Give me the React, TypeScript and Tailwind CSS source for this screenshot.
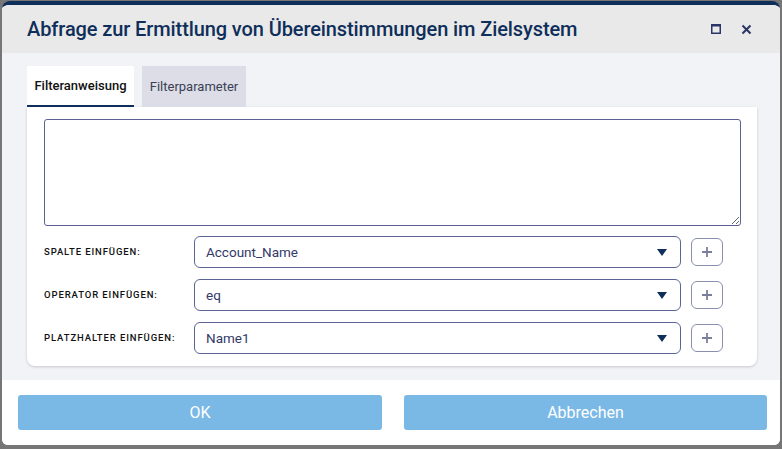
import React from 'react';

const ROWS = [
  { label: 'Spalte einfügen:', value: 'Account_Name' },
  { label: 'Operator einfügen:', value: 'eq' },
  { label: 'Platzhalter einfügen:', value: 'Name1' },
];

function Caret() {
  return (
    <svg width="10" height="7" viewBox="0 0 10 7" className="text-[#0f2f5a]">
      <path d="M0 0 L10 0 L5 7 Z" fill="currentColor" />
    </svg>
  );
}

function PlusIcon() {
  return (
    <svg width="12" height="12" viewBox="0 0 12 12" className="text-[#7a7f9e]">
      <path d="M6 1 V11 M1 6 H11" stroke="currentColor" strokeWidth="1.8" />
    </svg>
  );
}

export default function App() {
  return (
    <div className="w-[782px] h-[449px] bg-[#767676] overflow-hidden font-['Roboto',sans-serif] pt-px px-[2px] pb-[4px]">
      <div className="h-full flex flex-col rounded-t-lg rounded-b-md overflow-hidden border-t-4 border-[#0f2f5a] bg-white">
        <header className="h-[48px] bg-[#e9e9e9] flex items-center pl-[25px] pr-[28px]">
          <h1 className="text-[20px] font-medium text-[#0f2f5a] tracking-[-0.1px] flex-1">
            Abfrage zur Ermittlung von Übereinstimmungen im Zielsystem
          </h1>
          <div className="flex items-center gap-[20px] text-[#2b3566]">
            <svg width="10" height="10" viewBox="0 0 10 10">
              <rect x="0.75" y="0.75" width="8.5" height="8.5" fill="none" stroke="currentColor" strokeWidth="1.5" />
              <rect x="0" y="0" width="10" height="2.5" fill="currentColor" />
            </svg>
            <svg width="11" height="11" viewBox="0 0 11 11">
              <path d="M1.5 1.5 L9.5 9.5 M9.5 1.5 L1.5 9.5" stroke="currentColor" strokeWidth="2" />
            </svg>
          </div>
        </header>

        <main className="bg-[#f2f3f7] h-[327px] pt-[13px] px-[25px]">
          <div className="flex gap-[8px] text-[13px]">
            <div className="h-[41px] w-[107px] bg-white flex items-center justify-center font-medium text-[#111] border-b-2 border-[#0f2f5a]">
              Filteranweisung
            </div>
            <div className="h-[41px] w-[104px] bg-[#dcdde6] flex items-center justify-center text-[#3a3f55]">
              Filterparameter
            </div>
          </div>
          <div className="w-[730px] bg-white rounded-b-lg shadow-[0_1px_3px_rgba(0,0,0,0.18)] pt-[12px] px-[17px] pb-[12px]">
            <textarea className="block w-[697px] h-[107px] border border-[#5b6190] rounded-[3px] outline-none resize-y" />
            <div className="mt-[10px] flex flex-col gap-[11px]">
              {ROWS.map((row) => (
                <div key={row.label} className="flex items-center">
                  <div className="w-[150px] text-[9.5px] uppercase tracking-[0.9px] font-medium text-[#111]">
                    {row.label}
                  </div>
                  <div className="w-[487px] h-[32px] border border-[#5b6494] rounded-[6px] flex items-center pl-[11px] pr-[13px]">
                    <span className="flex-1 text-[13.5px] text-[#33396a]">{row.value}</span>
                    <Caret />
                  </div>
                  <div className="ml-[10px] w-[32px] h-[28px] border border-[#8a8fae] rounded-[6px] flex items-center justify-center">
                    <PlusIcon />
                  </div>
                </div>
              ))}
            </div>
          </div>
        </main>

        <footer className="flex-1 bg-white flex items-start pt-[15px] pl-[16px] pr-[11px] gap-[22px]">
          <button className="shrink-0 w-[364px] h-[35px] bg-[#7ab9e6] rounded-[3px] text-white text-[16px]">OK</button>
          <button className="shrink-0 w-[363px] h-[35px] bg-[#7ab9e6] rounded-[3px] text-white text-[16px]">Abbrechen</button>
        </footer>
      </div>
    </div>
  );
}
